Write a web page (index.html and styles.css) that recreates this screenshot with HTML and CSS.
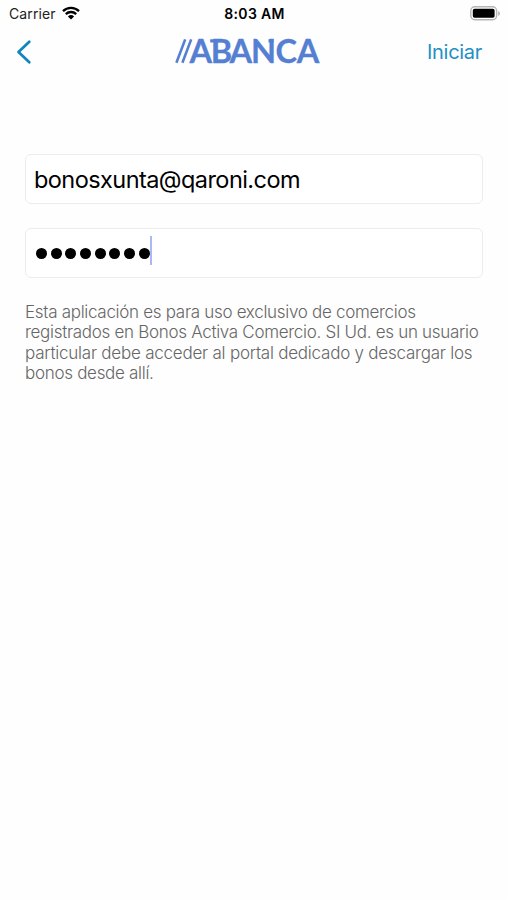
FILE: index.html
```html
<!DOCTYPE html>
<html lang="es">
<head>
    <meta charset="UTF-8">
    <title>ABANCA</title>
    <link rel="stylesheet" href="styles.css">
</head>
<body>
    <div class="status-bar">
        <div class="status-left">
            <span class="carrier">Carrier</span>
            <svg class="wifi" width="18" height="14" viewBox="0 0 18 14">
                <path d="M1 5.2a11.5 11.5 0 0 1 16 0M3.8 8.1a7.5 7.5 0 0 1 10.4 0" fill="none" stroke="#000" stroke-width="2.3"/>
                <path d="M5.9 10.4a4.5 4.5 0 0 1 6.2 0L9 13.6z" fill="#000"/>
            </svg>
        </div>
        <span class="time">8:03 AM</span>
        <svg class="battery" width="30" height="15" viewBox="0 0 30 15">
            <rect x="0.8" y="0.8" width="25.8" height="13" rx="4" fill="#fff" stroke="#b5b5b5" stroke-width="1.4"/>
            <rect x="2.8" y="2.8" width="21.8" height="9" rx="1.8" fill="#000"/>
            <path d="M28.2 5v5q1.8-.8 1.8-2.5T28.2 5z" fill="#b5b5b5"/>
        </svg>
    </div>
    <div class="nav-bar">
        <svg class="back" width="16" height="26" viewBox="0 0 16 26">
            <path d="M13.3 2.7L2.5 13l10.8 10.3" fill="none" stroke="#1585bd" stroke-width="2.8" stroke-linecap="round" stroke-linejoin="round"/>
        </svg>
        <svg class="logo" width="148" height="46" viewBox="0 0 148 46">
            <path d="M1.4 33.8L10.2 10.4M7.4 33.8L16.2 10.4" stroke="#557fd2" stroke-width="2.6"/>
            <text x="14.6 35.8 54.4 76 100.4 121.8" y="33.8">ABANCA</text>
            <!-- small serifs on the B and the N -->
            <path d="M35.2 10.2h5v3.2h-5zM93.5 10.2h5v3.2h-5z" fill="#557fd2"/>
        </svg>
        <a class="start">Iniciar</a>
    </div>
    <form class="login-form">
        <div class="field email">bonosxunta@qaroni.com</div>
        <div class="field password">
            <span class="dot"></span><span class="dot"></span><span class="dot"></span><span class="dot"></span>
            <span class="dot"></span><span class="dot"></span><span class="dot"></span><span class="dot"></span>
            <span class="caret"></span>
        </div>
        <p class="notice">
            <span class="line line-1">Esta aplicación es para uso exclusivo de comercios</span>
            <span class="line line-2">registrados en Bonos Activa Comercio. SI Ud. es un usuario</span>
            <span class="line line-3">particular debe acceder al portal dedicado y descargar los</span>
            <span class="line line-4">bonos desde allí.</span>
        </p>
    </form>
</body>
</html>
```
FILE: styles.css
```css
body {
    margin: 0;
    background: #fefefe;
    color: #000;
    font-family: Inter, "Liberation Sans", sans-serif;
}
/* Phone status bar */
.status-bar {
    display: grid;
    grid-template-columns: 1fr auto 1fr;
    align-items: center;
    height: 27px;
    padding: 0 7px 0 9px;
}
.status-left {
    display: flex;
    align-items: center;
    gap: 6px;
}
.carrier {
    font-size: 14px;
    letter-spacing: 0.1px;
    color: #222;
}
.wifi {
    margin-top: -2px;
}
.time {
    font-size: 14px;
    font-weight: 600;
    letter-spacing: 0.3px;
}
.battery {
    justify-self: end;
}
/* Navigation bar */
.nav-bar {
    display: grid;
    grid-template-columns: 1fr auto 1fr;
    align-items: center;
    height: 50px;
    padding: 0 25px 0 16px;
}
.logo text {
    font-family: Lato, sans-serif;
    font-size: 32.5px;
    font-weight: 700;
    fill: #557fd2;
    stroke: #557fd2;
    stroke-width: 0.3px;
}
.start {
    justify-self: end;
    font-size: 20px;
    letter-spacing: -0.3px;
    color: #2390c4;
}
/* Login form */
.login-form {
    padding: 77px 24px 0 25px;
}
.field {
    display: flex;
    align-items: center;
    box-sizing: border-box;
    height: 50px;
    margin-bottom: 24px;
    padding: 0 8px;
    border: 1px solid #ececec;
    border-radius: 6px;
    background: #fff;
}
.email {
    font-size: 23.5px;
    letter-spacing: -0.56px;
}
.password {
    gap: 3.7px;
    padding-left: 10px;
}
.dot {
    width: 11px;
    height: 11px;
    border-radius: 50%;
    background: #000;
}
.caret {
    width: 2px;
    height: 29px;
    margin-left: -3.5px;
    margin-top: -5px;
    background: #aab9f3;
}
.notice {
    margin: 0;
    font-size: 17px;
    font-weight: 300;
    line-height: 20.4px;
    color: #666;
}
.line {
    display: block;
    white-space: nowrap;
    letter-spacing: -0.3px;
}
.line-3 {
    letter-spacing: -0.23px;
}
```
